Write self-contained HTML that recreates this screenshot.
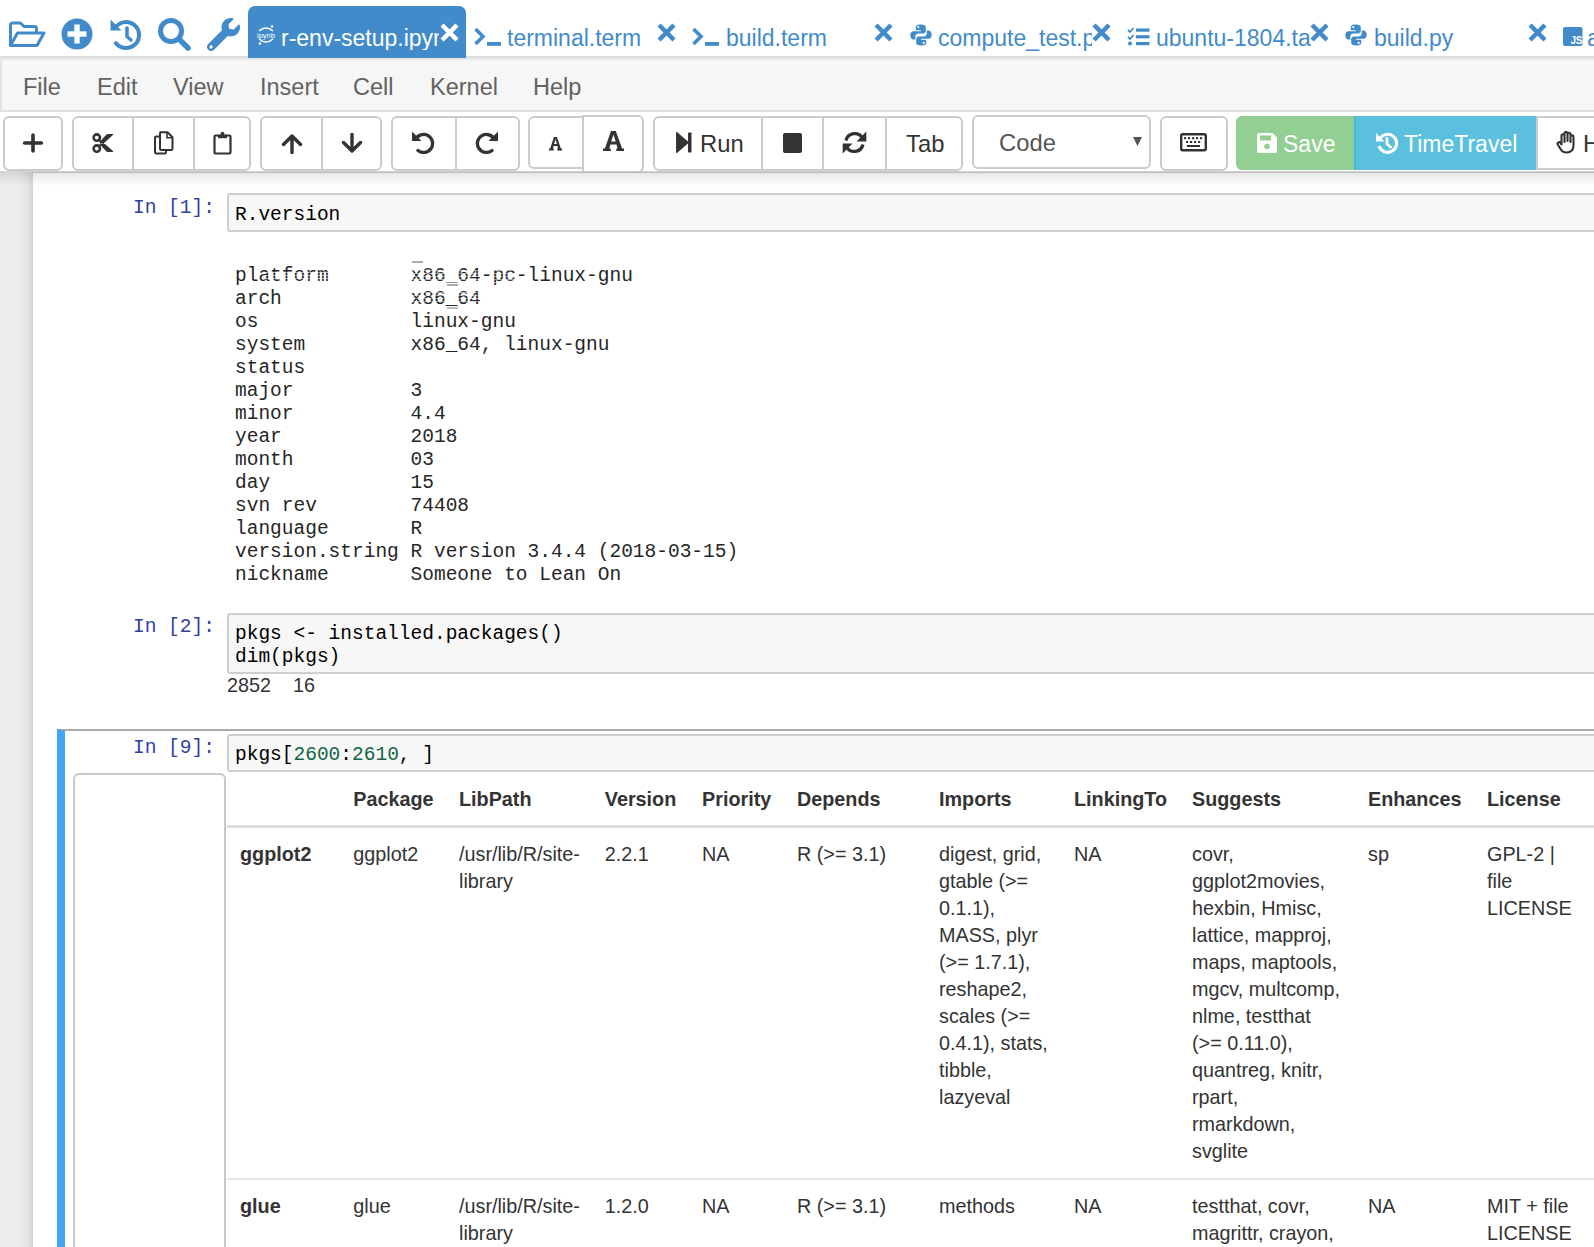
<!DOCTYPE html>
<html><head><meta charset="utf-8">
<style>
*{box-sizing:border-box;margin:0;padding:0}
html,body{width:1594px;height:1247px;overflow:hidden;background:#fff;font-family:"Liberation Sans",sans-serif;position:relative}
.abs{position:absolute}
#tabs{left:0;top:0;width:1594px;height:60px;background:#fff}
.ic{position:absolute;fill:#428bca}
.tab{position:absolute;top:5px;height:52px;font-size:23px;color:#428bca;white-space:nowrap;overflow:hidden}
.tab .lbl{position:absolute;top:21px;line-height:24px}
#menu{left:0;top:60px;width:1594px;height:52px;background:#f6f6f6;border-bottom:2px solid #dedede;border-left:2px solid #e4e4e4}
#menu span{position:absolute;top:13.5px;font-size:23.5px;color:#626262;line-height:26px}
#tool{left:0;top:112px;width:1594px;height:61px;background:#fff}
.btn{position:absolute;top:116px;height:55px;border:2px solid #ccc;background:#fff;border-radius:6px}
.div{position:absolute;top:116px;width:2px;height:55px;background:#ccc}
#nb{left:0;top:172px;width:1594px;height:1075px;background:#fff}
#strip{left:0;top:172px;width:33px;height:1075px;background:#eee}
.mono{font-family:"Liberation Mono",monospace}
.prompt{position:absolute;font-family:"Liberation Mono",monospace;font-size:19.5px;color:#303f9f;line-height:23px}
.inbox{position:absolute;left:227px;width:1400px;background:#f7f7f7;border:2px solid #cfcfcf;border-radius:3px}
.code{font-family:"Liberation Mono",monospace;font-size:19.5px;line-height:23px;color:#000}
pre.out{position:absolute;left:235px;font-family:"Liberation Mono",monospace;font-size:19.5px;line-height:23px;color:#262626}
.cell{position:absolute;font-size:19.8px;line-height:27px;color:#333;white-space:nowrap}
table.df{position:absolute;left:227px;top:773px;border-collapse:collapse;font-size:19px;color:#000}
</style></head><body>
<div id="tabs" class="abs"><div class="abs" style="left:0;top:56px;width:1594px;height:2px;background:#dcdcdc"></div><div class="abs" style="left:0;top:58px;width:1594px;height:2px;background:#e8e8e8"></div>
<svg class="ic" style="left:8px;top:21px" width="38" height="27" viewBox="0 0 38 27"><path d="M2.5 24.5V4Q2.5 2 4.5 2H12.5L16 5.5H26.5Q28.5 5.5 28.5 7.5V11" fill="none" stroke="#428bca" stroke-width="3" stroke-linejoin="round"/><path d="M2.5 24.5L9.5 12H36L29 24.5Z" fill="none" stroke="#428bca" stroke-width="3" stroke-linejoin="round"/></svg>
<svg class="ic" style="left:61px;top:18px" width="32" height="32" viewBox="0 0 32 32"><circle cx="16" cy="16" r="15.5" fill="#428bca"/><rect x="6.5" y="13.3" width="19" height="5.4" fill="#fff"/><rect x="13.3" y="6.5" width="5.4" height="19" fill="#fff"/></svg>
<svg class="ic" style="left:109px;top:17px" width="34" height="34" viewBox="0 0 34 34"><path d="M6.5 10.5A13 13 0 1 1 6.8 26" fill="none" stroke="#428bca" stroke-width="4" stroke-linecap="round"/><path d="M1.5 2.5L1.5 13.5L12.5 13.5Z" fill="#428bca"/><path d="M18 11V19.5L22 23" fill="none" stroke="#428bca" stroke-width="3.6" stroke-linecap="round" stroke-linejoin="round"/></svg>
<svg class="ic" style="left:157px;top:17px" width="35" height="35" viewBox="0 0 35 35"><circle cx="14" cy="14" r="10.5" fill="none" stroke="#428bca" stroke-width="5"/><path d="M22 22L31 31" stroke="#428bca" stroke-width="5.5" stroke-linecap="round"/></svg>
<svg class="ic" style="left:207px;top:18px" width="33" height="33" viewBox="0 0 512 512"><path fill="#428bca" d="M507.73 109.1c-2.24-9.03-13.54-12.09-20.12-5.51l-74.36 74.36-67.88-11.31-11.31-67.88 74.36-74.36c6.62-6.62 3.43-17.9-5.66-20.16-47.38-11.74-99.55.91-136.58 37.93-39.64 39.64-50.55 97.1-34.05 147.2L18.74 402.76c-24.99 24.99-24.99 65.51 0 90.5 24.99 24.99 65.51 24.99 90.5 0l213.21-213.21c50.12 16.71 107.47 5.68 147.37-34.22 37.07-37.07 49.7-89.32 37.910-136.73zM64 472c-13.25 0-24-10.75-24-24 0-13.26 10.75-24 24-24s24 10.74 24 24c0 13.250-10.75 24-24 24z"/></svg>
<div class="tab" style="left:248px;top:6px;height:52px;width:218px;background:#428bca;border-radius:7px 7px 0 0">
<svg style="position:absolute;left:8px;top:18px" width="20" height="22" viewBox="0 0 20 22"><path d="M3 7Q10 1 17 7" fill="none" stroke="#fff" stroke-width="1.6"/><path d="M3 15Q10 21 17 15" fill="none" stroke="#fff" stroke-width="1.6"/><circle cx="16" cy="2.5" r="1.3" fill="#fff"/><circle cx="4" cy="19.5" r="1.3" fill="#fff"/><text x="10" y="13.5" font-size="7.5" fill="#fff" text-anchor="middle" font-family="Liberation Sans">ipynb</text></svg>
<div class="lbl" style="left:33px;top:20px;width:158px;overflow:hidden;color:#fff">r-env-setup.ipynb</div>
</div>
<svg style="position:absolute;left:440px;top:23px" width="19" height="19" viewBox="0 0 19 19"><path d="M3.6 3.6L15.4 15.4M15.4 3.6L3.6 15.4" stroke="#fff" stroke-width="4.4" stroke-linecap="square"/></svg><svg style="position:absolute;left:474px;top:27px" width="28" height="20" viewBox="0 0 28 20"><path d="M1.5 2L9 9.5L1.5 17" fill="none" stroke="#428bca" stroke-width="3.6"/><rect x="13" y="15" width="14" height="3.8" fill="#428bca"/></svg><div class="tab" style="left:507px;width:150px;top:5px;background:transparent"><div class="lbl" style="left:0;width:150px">terminal.term</div></div><svg style="position:absolute;left:657px;top:23px" width="19" height="19" viewBox="0 0 19 19"><path d="M3.6 3.6L15.4 15.4M15.4 3.6L3.6 15.4" stroke="#428bca" stroke-width="4.4" stroke-linecap="square"/></svg><svg style="position:absolute;left:692px;top:27px" width="28" height="20" viewBox="0 0 28 20"><path d="M1.5 2L9 9.5L1.5 17" fill="none" stroke="#428bca" stroke-width="3.6"/><rect x="13" y="15" width="14" height="3.8" fill="#428bca"/></svg><div class="tab" style="left:726px;width:150px;top:5px;background:transparent"><div class="lbl" style="left:0;width:150px">build.term</div></div><svg style="position:absolute;left:874px;top:23px" width="19" height="19" viewBox="0 0 19 19"><path d="M3.6 3.6L15.4 15.4M15.4 3.6L3.6 15.4" stroke="#428bca" stroke-width="4.4" stroke-linecap="square"/></svg><svg style="position:absolute;left:910px;top:24px" width="22" height="22" viewBox="0 0 22 22"><path d="M10.3 0.5C6.5 0.5 5.8 2 5.8 3.6V6.2H10.8V7.2H3.6C1.6 7.2 0.3 8.8 0.3 11.2C0.3 13.8 1.6 15.4 3.4 15.4H5.3V12.6C5.3 10.8 6.8 9.6 8.7 9.6H13C14.6 9.6 15.8 8.4 15.8 6.8V3.6C15.8 1.8 14.2 0.5 10.3 0.5Z" fill="#428bca"/><circle cx="8.3" cy="3.1" r="1.1" fill="#fff"/><path d="M11.7 21.5C15.5 21.5 16.2 20 16.2 18.4V15.8H11.2V14.8H18.4C20.4 14.8 21.7 13.2 21.7 10.8C21.7 8.2 20.4 6.6 18.6 6.6H16.7V9.4C16.7 11.2 15.2 12.4 13.3 12.4H9C7.4 12.4 6.2 13.6 6.2 15.2V18.4C6.2 20.2 7.8 21.5 11.7 21.5Z" fill="#428bca"/><circle cx="13.7" cy="18.9" r="1.1" fill="#fff"/></svg><div class="tab" style="left:938px;width:154px;top:5px;background:transparent"><div class="lbl" style="left:0;width:154px">compute_test.py</div></div><svg style="position:absolute;left:1092px;top:23px" width="19" height="19" viewBox="0 0 19 19"><path d="M3.6 3.6L15.4 15.4M15.4 3.6L3.6 15.4" stroke="#428bca" stroke-width="4.4" stroke-linecap="square"/></svg><svg style="position:absolute;left:1127px;top:27px" width="23" height="19" viewBox="0 0 23 19"><path d="M1 3L3 5L6.5 1" fill="none" stroke="#428bca" stroke-width="1.8"/><path d="M1 10L3 12L6.5 8" fill="none" stroke="#428bca" stroke-width="1.8"/><circle cx="3" cy="16.5" r="2" fill="#428bca"/><rect x="9" y="1.5" width="13.5" height="3.2" fill="#428bca"/><rect x="9" y="8.2" width="13.5" height="3.2" fill="#428bca"/><rect x="9" y="15" width="13.5" height="3.2" fill="#428bca"/></svg><div class="tab" style="left:1156px;width:155px;top:5px;background:transparent"><div class="lbl" style="left:0;width:155px">ubuntu-1804.tasks</div></div><svg style="position:absolute;left:1310px;top:23px" width="19" height="19" viewBox="0 0 19 19"><path d="M3.6 3.6L15.4 15.4M15.4 3.6L3.6 15.4" stroke="#428bca" stroke-width="4.4" stroke-linecap="square"/></svg><svg style="position:absolute;left:1345px;top:24px" width="22" height="22" viewBox="0 0 22 22"><path d="M10.3 0.5C6.5 0.5 5.8 2 5.8 3.6V6.2H10.8V7.2H3.6C1.6 7.2 0.3 8.8 0.3 11.2C0.3 13.8 1.6 15.4 3.4 15.4H5.3V12.6C5.3 10.8 6.8 9.6 8.7 9.6H13C14.6 9.6 15.8 8.4 15.8 6.8V3.6C15.8 1.8 14.2 0.5 10.3 0.5Z" fill="#428bca"/><circle cx="8.3" cy="3.1" r="1.1" fill="#fff"/><path d="M11.7 21.5C15.5 21.5 16.2 20 16.2 18.4V15.8H11.2V14.8H18.4C20.4 14.8 21.7 13.2 21.7 10.8C21.7 8.2 20.4 6.6 18.6 6.6H16.7V9.4C16.7 11.2 15.2 12.4 13.3 12.4H9C7.4 12.4 6.2 13.6 6.2 15.2V18.4C6.2 20.2 7.8 21.5 11.7 21.5Z" fill="#428bca"/><circle cx="13.7" cy="18.9" r="1.1" fill="#fff"/></svg><div class="tab" style="left:1374px;width:150px;top:5px;background:transparent"><div class="lbl" style="left:0;width:150px">build.py</div></div><svg style="position:absolute;left:1528px;top:23px" width="19" height="19" viewBox="0 0 19 19"><path d="M3.6 3.6L15.4 15.4M15.4 3.6L3.6 15.4" stroke="#428bca" stroke-width="4.4" stroke-linecap="square"/></svg><svg style="position:absolute;left:1563px;top:27px" width="20" height="19" viewBox="0 0 20 19"><rect x="0" y="0" width="19.5" height="19" rx="2" fill="#428bca"/><text x="13.2" y="17.2" font-size="10" font-weight="bold" fill="#fff" text-anchor="middle" font-family="Liberation Sans" letter-spacing="-0.5">JS</text></svg><div class="tab" style="left:1587px;width:20px;top:5px;background:transparent"><div class="lbl" style="left:0;width:20px">a</div></div></div>
<div id="menu" class="abs">
<span style="left:21px">File</span><span style="left:95px">Edit</span><span style="left:171px">View</span><span style="left:258px">Insert</span><span style="left:351px">Cell</span><span style="left:428px">Kernel</span><span style="left:531px">Help</span>
</div>
<div id="tool" class="abs"></div><div class="abs" style="left:0;top:171px;width:1594px;height:2px;background:#d2d2d2"></div>
<div class="btn" style="left:3px;width:60px;"></div><div class="btn" style="left:72px;width:179px;"></div><div class="div" style="left:131.5px"></div><div class="div" style="left:193px"></div><div class="btn" style="left:260px;width:122px;"></div><div class="div" style="left:321px"></div><div class="btn" style="left:391px;width:129px;"></div><div class="div" style="left:454.5px"></div><div class="btn" style="left:528px;width:56px;height:53px;border-radius:6px 0 0 6px"></div><div class="btn" style="left:582px;width:62px;top:115px;height:58px;border-radius:0 6px 6px 0"></div><div class="btn" style="left:653px;width:310px;"></div><div class="div" style="left:761px"></div><div class="div" style="left:822px"></div><div class="div" style="left:885px"></div><div class="btn" style="left:972px;width:179px;top:115px;height:54px"></div><div class="btn" style="left:1160px;width:68px;"></div><div class="abs" style="left:1236px;top:116px;width:118px;height:54px;background:#93cf93;border-radius:6px 0 0 6px"></div><div class="abs" style="left:1354px;top:116px;width:182px;height:54px;background:#5bc0de;border-left:2px solid #46b8da"></div><div class="abs" style="left:1536px;top:116px;width:80px;height:54px;background:#fff;border:2px solid #ccc"></div><svg class="abs" style="left:22px;top:133px" width="22" height="20" viewBox="0 0 22 20"><path d="M11 2V18M2.6 10H19.4" stroke="#333" stroke-width="3.6" stroke-linecap="round"/></svg><svg class="abs" style="left:92px;top:133px" width="22" height="21" viewBox="0 0 22 21"><circle cx="4.8" cy="4.6" r="3.2" fill="none" stroke="#333" stroke-width="2.6"/><circle cx="4.8" cy="15.6" r="3.2" fill="none" stroke="#333" stroke-width="2.6"/><path d="M7 6.5L20.5 18.5L15.5 18.5L10.5 13.5Z M7 13.8L20.5 1.5L15.5 1.5L10.5 6.5Z" fill="#333" stroke="#333" stroke-width="1.2" stroke-linejoin="round"/></svg><svg class="abs" style="left:153px;top:131px" width="21" height="24" viewBox="0 0 21 24"><path d="M8 5.5H3.2Q2 5.5 2 6.7V21.3Q2 22.5 3.2 22.5H11.8Q13 22.5 13 21.3V19" fill="none" stroke="#333" stroke-width="2"/><path d="M7.2 1.2H14.5L19.5 6.2V17.8Q19.5 19 18.3 19H8.2Q7 19 7 17.8V2.4Q7 1.2 8.2 1.2Z" fill="none" stroke="#333" stroke-width="2" stroke-linejoin="round"/><path d="M14 1.5V6.7H19.2" fill="none" stroke="#333" stroke-width="1.6"/></svg><svg class="abs" style="left:213px;top:131px" width="19" height="24" viewBox="0 0 19 24"><rect x="1.5" y="4.5" width="16" height="18" rx="1.2" fill="none" stroke="#333" stroke-width="2.2"/><path d="M5 3.8H14V7.2H5Z" fill="#333"/><circle cx="9.5" cy="2.6" r="1.8" fill="#333"/></svg><svg class="abs" style="left:281px;top:133px" width="22" height="21" viewBox="0 0 22 21"><path d="M11 19.5V3M2.5 11.5L11 3L19.5 11.5" fill="none" stroke="#333" stroke-width="3.4" stroke-linecap="round" stroke-linejoin="round"/></svg><svg class="abs" style="left:341px;top:133px" width="22" height="21" viewBox="0 0 22 21"><path d="M11 1.5V18M2.5 9.5L11 18L19.5 9.5" fill="none" stroke="#333" stroke-width="3.4" stroke-linecap="round" stroke-linejoin="round"/></svg><svg class="abs" style="left:411px;top:131px" width="24" height="23" viewBox="0 0 24 23"><path d="M4.5 8.5A9 9 0 1 1 7 19.5" fill="none" stroke="#333" stroke-width="3.3" stroke-linecap="round"/><path d="M1 0.5V10H10.5Z" fill="#333"/></svg><svg class="abs" style="left:475px;top:131px" width="24" height="23" viewBox="0 0 24 23"><path d="M19.5 8.5A9 9 0 1 0 17 19.5" fill="none" stroke="#333" stroke-width="3.3" stroke-linecap="round"/><path d="M23 0.5V10H13.5Z" fill="#333"/></svg><svg class="abs" style="left:549px;top:137.4px" width="13" height="13.4" viewBox="0 0 21 20.2" preserveAspectRatio="none"><path d="M0 20.2V17.4H1.9L8 0H12.8L19.1 17.4H21V20.2H13.3V17.4H14.6L13.5 13.6H7.4L6.3 17.4H7.7V20.2Z M8.2 10.6H12.7L10.5 3.4Z" fill="#333" fill-rule="evenodd"/></svg><svg class="abs" style="left:603px;top:131px" width="21" height="20.2" viewBox="0 0 21 20.2"><path d="M0 20.2V17.4H1.9L8 0H12.8L19.1 17.4H21V20.2H13.3V17.4H14.6L13.5 13.6H7.4L6.3 17.4H7.7V20.2Z M8.2 10.6H12.7L10.5 3.4Z" fill="#333" fill-rule="evenodd"/></svg><svg class="abs" style="left:676px;top:132px" width="16" height="21" viewBox="0 0 16 21"><path d="M0.8 0.8L12 10.5L0.8 20.2Z" fill="#333" stroke="#333" stroke-width="1.5" stroke-linejoin="round"/><rect x="12" y="0.5" width="3.5" height="20" rx="0.8" fill="#333"/></svg><div class="abs" style="left:700px;top:129.5px;font-size:23.8px;line-height:28px;color:#333">Run</div><svg class="abs" style="left:783px;top:133px" width="19" height="20" viewBox="0 0 19 20"><rect x="0" y="0" width="19" height="20" rx="2" fill="#333"/></svg><svg class="abs" style="left:842px;top:131px" width="25" height="23" viewBox="0 0 25 23"><path d="M4 9.5A9 9 0 0 1 20.5 7" fill="none" stroke="#333" stroke-width="3.3"/><path d="M21 13.5A9 9 0 0 1 4.5 16" fill="none" stroke="#333" stroke-width="3.3"/><path d="M24.3 0.5V10.5H14.5Z" fill="#333"/><path d="M0.7 22.5V12.5H10.5Z" fill="#333"/></svg><div class="abs" style="left:906px;top:129.5px;font-size:23.8px;line-height:28px;color:#333">Tab</div><div class="abs" style="left:999px;top:128.5px;font-size:23.8px;line-height:28px;color:#555">Code</div><svg class="abs" style="left:1133px;top:137px" width="9" height="9" viewBox="0 0 9 9"><path d="M0 0H9L4.5 9Z" fill="#555"/></svg><svg class="abs" style="left:1180px;top:133px" width="27" height="19" viewBox="0 0 27 19"><rect x="1.2" y="1.2" width="24.6" height="16" rx="1.5" fill="none" stroke="#333" stroke-width="2.4"/><g fill="#333"><rect x="4" y="4.2" width="2.2" height="2"/><rect x="8" y="4.2" width="2.2" height="2"/><rect x="12" y="4.2" width="2.2" height="2"/><rect x="16" y="4.2" width="2.2" height="2"/><rect x="20" y="4.2" width="2.2" height="2"/><rect x="6" y="8" width="2.2" height="2"/><rect x="10" y="8" width="2.2" height="2"/><rect x="14" y="8" width="2.2" height="2"/><rect x="18" y="8" width="2.2" height="2"/><rect x="7" y="12" width="13" height="2"/></g></svg><svg class="abs" style="left:1257px;top:133px" width="20" height="20" viewBox="0 0 20 20"><path d="M0 2Q0 0 2 0H15.5L20 4.5V18Q20 20 18 20H2Q0 20 0 18Z" fill="#fff"/><rect x="3" y="2.5" width="11" height="5" fill="#93cf93"/><circle cx="10" cy="13.5" r="2.8" fill="#93cf93"/></svg><div class="abs" style="left:1283px;top:129.5px;font-size:23px;line-height:28px;color:#fff">Save</div><svg class="abs" style="left:1375px;top:132px" width="23" height="22" viewBox="0 0 23 22"><path d="M5 6.5A9 9 0 1 1 4 14" fill="none" stroke="#fff" stroke-width="3"/><path d="M1 1V9.5H9.5Z" fill="#fff"/><path d="M12 6.5V12L15.5 15" fill="none" stroke="#fff" stroke-width="2.8" stroke-linecap="round" stroke-linejoin="round"/></svg><div class="abs" style="left:1404px;top:129.5px;font-size:23px;line-height:28px;color:#fff">TimeTravel</div><svg class="abs" style="left:1556px;top:131px" width="22" height="23" viewBox="0 0 22 23"><path d="M5.5 13V5Q5.5 3.3 7 3.3Q8.5 3.3 8.5 5V11M8.5 10V2.8Q8.5 1 10 1Q11.5 1 11.5 2.8V10M11.5 10V3.5Q11.5 1.8 13 1.8Q14.5 1.8 14.5 3.5V11M14.5 11V6Q14.5 4.3 16 4.3Q17.5 4.3 17.5 6V14Q17.5 21.5 10.5 21.5Q6.5 21.5 4.5 18L1.8 13.5Q1 12 2.3 11.3Q3.5 10.6 4.5 12L5.5 13.5" fill="none" stroke="#333" stroke-width="2.1" stroke-linejoin="round" stroke-linecap="round"/></svg><div class="abs" style="left:1583px;top:129.5px;font-size:23.8px;line-height:28px;color:#333">H</div>
<div id="strip" class="abs"></div>
<div class="abs" style="left:18px;top:172px;width:15px;height:1075px;background:linear-gradient(90deg,rgba(0,0,0,0),rgba(0,0,0,0.04) 60%,rgba(0,0,0,0.11))"></div>
<div class="abs" style="left:0;top:172px;width:1594px;height:14px;background:linear-gradient(rgba(0,0,0,0.1),rgba(0,0,0,0))"></div>
<div class="prompt" style="left:133px;top:196.51px">In [1]:</div>
<div class="inbox" style="top:193px;height:39px"></div>
<div class="abs code" style="left:235px;top:203.71px">R.version</div>
<pre class="out" style="top:264.81px">platform       x86_64-pc-linux-gnu
arch           x86_64
os             linux-gnu
system         x86_64, linux-gnu
status
major          3
minor          4.4
year           2018
month          03
day            15
svn rev        74408
language       R
version.string R version 3.4.4 (2018-03-15)
nickname       Someone to Lean On</pre>
<div class="abs" style="left:412px;top:261px;width:11px;height:1.5px;background:#aaa"></div>
<div class="abs" style="left:447px;top:284px;width:11px;height:1.5px;background:#aaa"></div>
<div class="abs" style="left:447px;top:307px;width:11px;height:1.5px;background:#bbb"></div>
<div class="abs" style="left:263px;top:272px;width:76px;height:12px;background:repeating-linear-gradient(rgba(255,255,255,0.55) 0 1px,rgba(255,255,255,0) 1px 3px)"></div>
<div class="abs" style="left:412px;top:270px;width:112px;height:14px;background:repeating-linear-gradient(rgba(255,255,255,0.5) 0 1px,rgba(255,255,255,0) 1px 3px)"></div>
<div class="abs" style="left:412px;top:292px;width:76px;height:14px;background:repeating-linear-gradient(rgba(255,255,255,0.45) 0 1px,rgba(255,255,255,0) 1px 3px)"></div>
<div class="prompt" style="left:133px;top:616.21px">In [2]:</div>
<div class="inbox" style="top:613px;height:61px"></div>
<div class="abs code" style="left:235px;top:623.41px;white-space:pre">pkgs &lt;- installed.packages()
dim(pkgs)</div>
<div class="abs" style="left:227px;top:671.5px;font-size:19.8px;line-height:27px;color:#333;white-space:pre">2852</div><div class="abs" style="left:293px;top:671.5px;font-size:19.8px;line-height:27px;color:#333;white-space:pre">16</div>
<div class="abs" style="left:57px;top:728.5px;width:1600px;height:600px;border-top:2px solid #aaa;border-left:8px solid #42a5f5"></div>
<div class="prompt" style="left:133px;top:736.71px">In [9]:</div>
<div class="inbox" style="top:734px;height:38px"></div>
<div class="abs code" style="left:235px;top:743.81px;white-space:pre">pkgs[<span style="color:#116644">2600</span>:<span style="color:#116644">2610</span>, ]</div>
<div class="abs" style="left:73px;top:773px;width:153px;height:600px;border:2px solid #c8c8c8;border-radius:6px"></div>
<div class="cell" style="left:353.3px;top:785.94px;font-weight:bold">Package</div>
<div class="cell" style="left:459.0px;top:785.94px;font-weight:bold">LibPath</div>
<div class="cell" style="left:604.8px;top:785.94px;font-weight:bold">Version</div>
<div class="cell" style="left:702.0px;top:785.94px;font-weight:bold">Priority</div>
<div class="cell" style="left:797.0px;top:785.94px;font-weight:bold">Depends</div>
<div class="cell" style="left:939.0px;top:785.94px;font-weight:bold">Imports</div>
<div class="cell" style="left:1074.0px;top:785.94px;font-weight:bold">LinkingTo</div>
<div class="cell" style="left:1192.0px;top:785.94px;font-weight:bold">Suggests</div>
<div class="cell" style="left:1368.0px;top:785.94px;font-weight:bold">Enhances</div>
<div class="cell" style="left:1487.0px;top:785.94px;font-weight:bold">License</div>
<div class="abs" style="left:227px;top:825px;width:1400px;height:3px;background:#ddd"></div>
<div class="cell" style="left:240.0px;top:841.44px"><b>ggplot2</b></div>
<div class="cell" style="left:353.3px;top:841.44px">ggplot2</div>
<div class="cell" style="left:459.0px;top:841.44px">/usr/lib/R/site-<br>library</div>
<div class="cell" style="left:604.8px;top:841.44px">2.2.1</div>
<div class="cell" style="left:702.0px;top:841.44px">NA</div>
<div class="cell" style="left:797.0px;top:841.44px">R (&gt;= 3.1)</div>
<div class="cell" style="left:939.0px;top:841.44px">digest, grid,<br>gtable (&gt;=<br>0.1.1),<br>MASS, plyr<br>(&gt;= 1.7.1),<br>reshape2,<br>scales (&gt;=<br>0.4.1), stats,<br>tibble,<br>lazyeval</div>
<div class="cell" style="left:1074.0px;top:841.44px">NA</div>
<div class="cell" style="left:1192.0px;top:841.44px">covr,<br>ggplot2movies,<br>hexbin, Hmisc,<br>lattice, mapproj,<br>maps, maptools,<br>mgcv, multcomp,<br>nlme, testthat<br>(&gt;= 0.11.0),<br>quantreg, knitr,<br>rpart,<br>rmarkdown,<br>svglite</div>
<div class="cell" style="left:1368.0px;top:841.44px">sp</div>
<div class="cell" style="left:1487.0px;top:841.44px">GPL-2 |<br>file<br>LICENSE</div>
<div class="abs" style="left:227px;top:1178px;width:1400px;height:2px;background:#e3e3e3"></div>
<div class="cell" style="left:240.0px;top:1192.54px"><b>glue</b></div>
<div class="cell" style="left:353.3px;top:1192.54px">glue</div>
<div class="cell" style="left:459.0px;top:1192.54px">/usr/lib/R/site-<br>library</div>
<div class="cell" style="left:604.8px;top:1192.54px">1.2.0</div>
<div class="cell" style="left:702.0px;top:1192.54px">NA</div>
<div class="cell" style="left:797.0px;top:1192.54px">R (&gt;= 3.1)</div>
<div class="cell" style="left:939.0px;top:1192.54px">methods</div>
<div class="cell" style="left:1074.0px;top:1192.54px">NA</div>
<div class="cell" style="left:1192.0px;top:1192.54px">testthat, covr,<br>magrittr, crayon,</div>
<div class="cell" style="left:1368.0px;top:1192.54px">NA</div>
<div class="cell" style="left:1487.0px;top:1192.54px">MIT + file<br>LICENSE</div>
</body></html>
